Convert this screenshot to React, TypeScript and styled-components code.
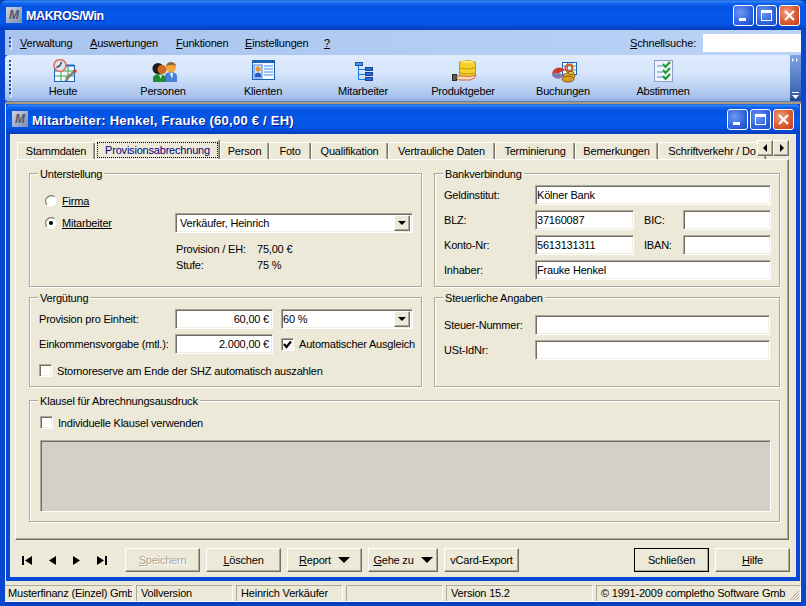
import React from 'react';
import styled, { createGlobalStyle } from 'styled-components';

const GlobalStyle = createGlobalStyle`
  html, body {
    margin: 0;
    padding: 0;
    background: #0a3ec0;
  }
  * {
    box-sizing: border-box;
  }
  body {
    font-family: "Liberation Sans", Arial, sans-serif;
    font-size: 11px;
    letter-spacing: -0.2px;
    color: #000;
  }
`;

const sunken = `
  border: 1px solid;
  border-color: #aca899 #fff #fff #aca899;
  box-shadow: inset 1px 1px 0 #716f64, inset -1px -1px 0 #f1efe2;
  background: #fff;
`;

const raised = `
  border: 1px solid;
  border-color: #fff #716f64 #716f64 #fff;
  box-shadow: inset -1px -1px 0 #aca899;
  background: #ece9d8;
`;

const titleGradient = `linear-gradient(180deg, #0a4fd8 0, #3d8bf5 1px, #1268f0 3px, #0453e0 7px, #0458ea 16px, #0455e4 24px, #0343c8 28px, #0a3ec0 30px)`;

const Frame = styled.div`
  width: 806px;
  height: 606px;
  display: flex;
  flex-direction: column;
  padding: 0 5px 4px;
  overflow: hidden;
  background: #0848d0;
  border-radius: 7px 7px 0 0;
`;

const TitleBar = styled.div<{ $child?: boolean }>`
  display: flex;
  align-items: center;
  flex: none;
  height: 30px;
  background: ${titleGradient};
  color: #fff;
  font-family: "Liberation Sans", Arial, sans-serif;
  font-weight: 700;
  font-size: ${p => (p.$child ? '13px' : '12.5px')};
  letter-spacing: ${p => (p.$child ? '0.25px' : '-0.4px')};
  text-shadow: 1px 1px 0 #0f1a89;
  margin: ${p => (p.$child ? '0' : '0 -5px')};
  padding: 0 6px;
  border-radius: ${p => (p.$child ? '5px 5px 0 0' : '7px 7px 0 0')};
`;

const AppIcon = styled.span`
  width: 16px;
  height: 16px;
  flex: none;
  margin-right: 4px;
  display: flex;
  align-items: center;
  justify-content: center;
  background: linear-gradient(135deg, #ccd6e8, #7f8cab);
  color: #4d566c;
  font: italic 700 12px "Liberation Sans", sans-serif;
  text-shadow: none;
  letter-spacing: 0;
`;

const TitleText = styled.span`
  flex: 1;
  padding-top: 2px;
  white-space: nowrap;
`;

const WinButtons = styled.div`
  display: flex;
  gap: 2px;
`;

const WinButton = styled.button<{ $close?: boolean }>`
  width: 21px;
  height: 21px;
  padding: 0;
  display: flex;
  align-items: center;
  justify-content: center;
  border: 1px solid #fff;
  border-radius: 3px;
  background: ${p =>
    p.$close
      ? 'radial-gradient(circle at 35% 35%, #f0a088, #dc5a30 55%, #c23c18)'
      : 'radial-gradient(circle at 35% 35%, #6f9af0, #2f63dd 60%, #1c48c4)'};
`;

const MenuBar = styled.div`
  flex: none;
  height: 25px;
  display: flex;
  align-items: center;
  padding-left: 4px;
  background: linear-gradient(90deg, #a9c4ee, #bad3f6);
`;

const Gripper = styled.span<{ $h: number }>`
  flex: none;
  width: 2px;
  height: ${p => p.$h}px;
  background: repeating-linear-gradient(180deg, #27509c 0 2px, transparent 2px 4px);
  box-shadow: 1px 1px 0 rgba(255, 255, 255, 0.7);
`;

const MenuItem = styled.span<{ $w: number }>`
  flex: none;
  width: ${p => p.$w}px;
`;

const Key = styled.span`
  text-decoration: underline;
`;

const Search = styled.div`
  margin-left: auto;
  display: flex;
  align-items: center;
  gap: 7px;
`;

const SearchInput = styled.div`
  width: 98px;
  height: 18px;
  background: #fff;
`;

const Toolbar = styled.div`
  flex: none;
  height: 47px;
  display: flex;
  align-items: flex-start;
  padding-left: 4px;
  border-radius: 4px 0 0 4px;
  background: linear-gradient(180deg, #dfebfd 0, #d6e5fb 40%, #a9c3ec 90%, #8fb0e2 100%);
  border-bottom: 1px solid #5b7fb8;
`;

const ToolGrip = styled(Gripper)`
  margin-top: 5px;
`;

const ToolItems = styled.div`
  display: flex;
  margin-left: 2px;
`;

const ToolItem = styled.div`
  width: 100px;
  display: flex;
  flex-direction: column;
  align-items: center;
  padding-top: 4px;
  gap: 2px;
`;

const Chevron = styled.div`
  margin-left: auto;
  width: 11px;
  height: 46px;
  display: flex;
  flex-direction: column;
  justify-content: space-between;
  align-items: center;
  padding: 3px 0 2px;
  background: linear-gradient(180deg, #7fa4e4, #3e68b8 80%, #1f448e);
  color: #fff;
`;

const Divider = styled.div`
  flex: none;
  height: 2px;
  background: #a8977a;
`;

const MdiArea = styled.div`
  flex: none;
  padding: 0 1px 4px 1px;
  background: #ece9d8;
`;

const ChildWindow = styled.div`
  padding-bottom: 4px;
  background: #0848d8;
`;

const ChildBody = styled.div`
  margin: 0 4px;
  height: 443px;
  padding: 5px 0 0 5px;
  background: #ece9d8;
`;

const Tabs = styled.div`
  position: relative;
  display: flex;
  align-items: flex-end;
  width: 772px;
  height: 20px;
  margin-left: 2px;
  overflow: hidden;
`;

const Tab = styled.div<{ $w: number; $active?: boolean }>`
  flex: none;
  width: ${p => p.$w}px;
  height: ${p => (p.$active ? '20px' : '17px')};
  padding-top: 2px;
  text-align: center;
  white-space: nowrap;
  overflow: hidden;
  border-top: 1px solid #fff;
  border-left: 1px solid #fff;
  border-right: 1px solid #716f64;
  box-shadow: inset -1px 0 0 #aca899;
  border-radius: 2px 2px 0 0;
  color: ${p => (p.$active ? '#000080' : '#000')};
  background: #ece9d8;
`;

const FocusText = styled.span`
  display: block;
  margin: 0 1px;
  height: 16px;
  line-height: 14px;
  border: 1px dotted #000;
`;

const TabScroll = styled.div`
  position: absolute;
  top: 1px;
  right: 0;
  display: flex;
`;

const ScrollButton = styled.span`
  ${raised}
  width: 16px;
  height: 16px;
  display: flex;
  align-items: center;
  justify-content: center;
`;

const Page = styled.div`
  width: 774px;
  height: 381px;
  padding: 13px 9px 0 13px;
  border-top: 1px solid #fff;
  border-left: 1px solid #fff;
  border-right: 1px solid #716f64;
  border-bottom: 1px solid #716f64;
  box-shadow: inset -1px -1px 0 #aca899;
  display: grid;
  grid-template-columns: 393px 346px;
  grid-template-rows: 114px 90px 125px;
  column-gap: 12px;
  row-gap: 10px;
`;

const Group = styled.div<{ $wide?: boolean; $pad: string }>`
  position: relative;
  padding: ${p => p.$pad};
  border: 1px solid #aca899;
  box-shadow: 1px 1px 0 #fff, inset 1px 1px 0 #fff;
  grid-column: ${p => (p.$wide ? '1 / 3' : 'auto')};
  margin-top: ${p => (p.$wide ? '3px' : '0')};
`;

const Legend = styled.span`
  position: absolute;
  top: -6px;
  left: 8px;
  padding: 0 2px;
  background: #ece9d8;
  white-space: nowrap;
`;

const ChoiceRow = styled.div<{ $top?: number }>`
  display: flex;
  align-items: center;
  height: 20px;
  gap: 5px;
  margin-top: ${p => p.$top ?? 0}px;
`;

const RadioLabel = styled.span`
  text-decoration: underline;
  width: 114px;
`;

const Combo = styled.div<{ $w: number; $left?: number; $inset: number }>`
  ${sunken}
  flex: none;
  width: ${p => p.$w}px;
  height: 20px;
  margin-left: ${p => p.$left ?? 0}px;
  padding: 0 2px 0 ${p => p.$inset}px;
  display: flex;
  align-items: center;
  justify-content: space-between;
`;

const ComboButton = styled.span`
  ${raised}
  width: 16px;
  height: 16px;
  display: flex;
  align-items: center;
  justify-content: center;
`;

const Triangle = styled.i<{ $size: number }>`
  display: block;
  border-style: solid;
  border-color: #000 transparent transparent;
  border-width: ${p => p.$size}px ${p => p.$size}px 0;
`;

const InfoGrid = styled.div`
  display: grid;
  grid-template-columns: 81px auto;
  grid-auto-rows: 16px;
  align-items: center;
  margin: 8px 0 0 131px;
`;

const BankGrid = styled.div`
  display: grid;
  grid-template-columns: 91px 99px 10px 39px 88px;
  grid-auto-rows: 20px;
  row-gap: 5px;
  align-items: center;
`;

const Field = styled.div<{ $span?: number; $right?: boolean; $w?: number }>`
  ${sunken}
  height: 20px;
  grid-column: ${p => (p.$span ? `span ${p.$span}` : 'auto')};
  ${p => (p.$w ? `width: ${p.$w}px; flex: none;` : '')}
  padding: ${p => (p.$right ? '0 3px 0 0' : '0 0 0 1px')};
  display: flex;
  align-items: center;
  justify-content: ${p => (p.$right ? 'flex-end' : 'flex-start')};
  white-space: nowrap;
`;

const Gap = styled.span``;

const TaxGrid = styled.div`
  display: grid;
  grid-template-columns: 91px 235px;
  grid-auto-rows: 20px;
  row-gap: 5px;
  align-items: center;
`;

const PayRow = styled.div`
  display: flex;
  align-items: center;
  height: 20px;
  margin-bottom: 5px;
`;

const PayLabel = styled.span`
  width: 136px;
  flex: none;
  white-space: nowrap;
`;

const CheckRow = styled.div<{ $top?: number; $left?: number }>`
  display: flex;
  align-items: center;
  gap: 5px;
  margin-top: ${p => p.$top ?? 0}px;
  margin-left: ${p => p.$left ?? 0}px;
  white-space: nowrap;
`;

const Box = styled.span`
  ${sunken}
  flex: none;
  width: 13px;
  height: 13px;
  display: flex;
  align-items: center;
  justify-content: center;
`;

const ClauseBox = styled.div`
  ${sunken}
  background: #d4d0c8;
  height: 72px;
  margin-top: 11px;
  box-shadow: inset 1px 1px 0 #716f64, inset -1px -1px 0 #d4d0c8;
`;

const ActionBar = styled.div`
  display: flex;
  align-items: center;
  gap: 6px;
  height: 24px;
  margin: 8px 0 0 -5px;
  padding-right: 6px;
`;

const NavIcons = styled.div`
  width: 109px;
  flex: none;
  display: flex;
  justify-content: space-between;
  padding: 0 11px 0 12px;
`;

const Button = styled.button<{ $w?: number; $off?: boolean; $default?: boolean; $push?: boolean }>`
  ${raised}
  flex: none;
  width: ${p => p.$w ?? 75}px;
  height: 24px;
  padding: 0 0 1px;
  font: inherit;
  letter-spacing: inherit;
  display: flex;
  align-items: center;
  justify-content: center;
  gap: 7px;
  color: ${p => (p.$off ? '#aca899' : '#000')};
  text-shadow: ${p => (p.$off ? '1px 1px 0 #fff' : 'none')};
  margin-left: ${p => (p.$push ? 'auto' : '0')};
  ${p => (p.$default ? 'outline: 1px solid #000; outline-offset: -1px;' : '')}
`;

const StatusBar = styled.div`
  flex: none;
  height: 17px;
  display: flex;
  gap: 3px;
  background: #ece9d8;
  border-bottom: 1px solid #fff;
`;

const StatusPanel = styled.div<{ $w?: number; $first?: boolean }>`
  position: relative;
  flex: ${p => (p.$w ? 'none' : '1')};
  width: ${p => (p.$w ? `${p.$w}px` : 'auto')};
  padding-left: ${p => (p.$first ? '3px' : '4px')};
  border-top: 1px solid #aca899;
  border-left: ${p => (p.$first ? '0' : '1px solid #aca899')};
  border-right: 1px solid #fff;
  white-space: nowrap;
  overflow: hidden;
  line-height: 15px;
`;

const Grip = styled.svg`
  position: absolute;
  right: 0;
  bottom: 0;
`;

const StatusFill = styled.div`
  flex: none;
  height: 3px;
  background: #0a3ec0;
`;

const MinIcon = () => (
  <svg width="13" height="13" viewBox="0 0 13 13"><rect x="2" y="9" width="7" height="3" fill="#fff" /></svg>
);
const MaxIcon = () => (
  <svg width="13" height="13" viewBox="0 0 13 13">
    <rect x="1.5" y="1.5" width="10" height="10" fill="none" stroke="#fff" />
    <rect x="1" y="1" width="11" height="3" fill="#fff" />
  </svg>
);
const CloseIcon = () => (
  <svg width="13" height="13" viewBox="0 0 13 13">
    <path d="M2 2L11 11M11 2L2 11" stroke="#fff" strokeWidth="2.2" />
  </svg>
);

const WindowControls = () => (
  <WinButtons>
    <WinButton><MinIcon /></WinButton>
    <WinButton><MaxIcon /></WinButton>
    <WinButton $close><CloseIcon /></WinButton>
  </WinButtons>
);

const Radio = ({ checked }: { checked?: boolean }) => (
  <svg width="12" height="12" viewBox="0 0 12 12" style={{ flex: 'none' }}>
    <circle cx="6" cy="6" r="5.5" fill="#fff" />
    <path d="M1.8 9.5A5.5 5.5 0 0 1 9.5 1.8" fill="none" stroke="#8a8778" strokeWidth="1.3" />
    {checked && <circle cx="6" cy="6" r="2" fill="#000" />}
  </svg>
);

const Tick = () => (
  <svg width="9" height="9" viewBox="0 0 9 9"><path d="M1 4L3.5 7L8 1.5" fill="none" stroke="#000" strokeWidth="2.2" /></svg>
);

const HeuteIcon = () => (
  <svg width="32" height="24" viewBox="0 0 32 24">
    <rect x="7.5" y="6.5" width="20" height="16" fill="#f4f8ff" stroke="#1a62c0" />
    <path d="M8 12H27M8 17H27M14 7V22M21 7V22" stroke="#2ea84a" />
    <path d="M8 6.5H27" stroke="#1a62c0" strokeWidth="2" />
    <circle cx="13" cy="6.5" r="6" fill="#dfe4ea" stroke="#e06a5c" strokeWidth="1.6" />
    <path d="M13 6.5L9.5 8.5M13 6.5L14.5 3" stroke="#444c5a" strokeWidth="1.6" />
    <path d="M19 20L28 12" stroke="#8a7d74" strokeWidth="3" />
    <path d="M27 13L29 11" stroke="#d8402a" strokeWidth="3" />
    <path d="M19 20L17.5 22L20 21.5Z" fill="#333" />
  </svg>
);

const PersonenIcon = () => (
  <svg width="32" height="24" viewBox="0 0 32 24">
    <path d="M18 23V16Q19 13 25 13Q30 14 30 17V23Z" fill="#4a80d8" />
    <path d="M23 14H26L25 20Z" fill="#fff" />
    <circle cx="24" cy="8.5" r="5" fill="#f2a53a" />
    <path d="M19 7Q20 3 24 3Q28 3 29 7Q25 5 19 7Z" fill="#8c6a3a" />
    <path d="M6 23V18Q8 15 13 15Q18 16 19 19V23Z" fill="#1f8a34" />
    <path d="M12 16H15L14 20Z" fill="#dff2df" />
    <circle cx="11" cy="9.5" r="5.5" fill="#1c1c1c" />
    <circle cx="15" cy="10.5" r="4.5" fill="#d06a20" />
  </svg>
);

const KlientenIcon = () => (
  <svg width="32" height="24" viewBox="0 0 32 24">
    <rect x="5.5" y="1.5" width="22" height="19" fill="#f4f8ff" stroke="#1a62c0" />
    <rect x="5" y="1" width="23" height="3" fill="#1a62c0" />
    <rect x="7" y="6" width="8" height="13" fill="#cfe0f8" stroke="#4a80d8" />
    <circle cx="11" cy="10" r="2.5" fill="#e8902a" />
    <path d="M8 18V15Q11 12 14 15V18Z" fill="#2a5cc0" />
    <path d="M17 7H26M17 10H26M17 13H26M17 16H26" stroke="#4a90e0" />
  </svg>
);

const MitarbeiterIcon = () => (
  <svg width="32" height="24" viewBox="0 0 32 24">
    <rect x="8.5" y="3.5" width="7" height="3" fill="#4a9ae8" stroke="#1f4fa8" />
    <path d="M11.5 7V20.5H18M12 10.5H18M12 15.5H18" fill="none" stroke="#1a78e0" />
    <rect x="18.5" y="8.5" width="7" height="3" fill="#2a70d0" stroke="#1f3f98" />
    <rect x="18.5" y="13.5" width="7" height="3" fill="#2a70d0" stroke="#1f3f98" />
    <rect x="18.5" y="18.5" width="7" height="3" fill="#2a70d0" stroke="#1f3f98" />
  </svg>
);

const ProduktgeberIcon = () => (
  <svg width="32" height="24" viewBox="0 0 32 24">
    <path d="M12.5 3Q20.5 0 28.5 3V17Q20.5 20 12.5 17Z" fill="#f6d02c" stroke="#c09a10" />
    <path d="M13 9Q20.5 11 28 9M13 14Q20.5 16 28 14" fill="none" stroke="#c09a10" />
    <path d="M13 3Q20.5 0.5 28 3Q20.5 5.5 13 3Z" fill="#ffe870" />
    <rect x="5.5" y="15.5" width="4" height="6" fill="#555b60" stroke="#2c2c2c" />
    <path d="M10 17H16Q22 18.5 29 16Q28 20 23 21H14Q11 21 10 20Z" fill="#f8dcc0" stroke="#c86a38" />
  </svg>
);

const BuchungenIcon = () => (
  <svg width="32" height="24" viewBox="0 0 32 24">
    <rect x="15.5" y="3.5" width="14" height="12" fill="#f4f8ff" stroke="#1a62c0" />
    <path d="M16 7H29M16 11H29M20.5 4V15M25 4V15" stroke="#3aa85a" />
    <circle cx="22" cy="9" r="3.5" fill="none" stroke="#e0502a" strokeWidth="2" />
    <path d="M5 15A7.5 7.5 0 0 1 18 11L12 14Z" fill="#d03a2a" />
    <path d="M5 15Q5 19 12 20L17 17L12 14Z" fill="#7a7ab0" />
    <ellipse cx="22" cy="17" rx="6" ry="3" fill="#e8b030" stroke="#8a5a10" />
    <ellipse cx="21" cy="20" rx="6" ry="3" fill="#d89a20" stroke="#8a5a10" />
    <ellipse cx="24" cy="14" rx="3" ry="1.5" fill="#f0d050" stroke="#8a5a10" />
  </svg>
);

const AbstimmenIcon = () => (
  <svg width="32" height="24" viewBox="0 0 32 24">
    <rect x="7.5" y="1.5" width="18" height="21" fill="#eef3fc" stroke="#8d9ec8" />
    <path d="M10 7H16M10 13H16M10 18H16" stroke="#4a90e0" />
    <path d="M16 5L18.5 8L23 3M16 11L18.5 14L23 9M16 17L18.5 20L23 15" fill="none" stroke="#1a9a2a" strokeWidth="2" />
  </svg>
);

const NavIcon = ({ d }: { d: string }) => (
  <svg width="11" height="9" viewBox="0 0 11 9"><path d={d} fill="#000" /></svg>
);

const menu: [string, string, number][] = [
  ['V', 'erwaltung', 70],
  ['A', 'uswertungen', 86],
  ['F', 'unktionen', 69],
  ['E', 'instellungen', 79],
  ['?', '', 20],
];

const tools: [string, React.FC][] = [
  ['Heute', HeuteIcon],
  ['Personen', PersonenIcon],
  ['Klienten', KlientenIcon],
  ['Mitarbeiter', MitarbeiterIcon],
  ['Produktgeber', ProduktgeberIcon],
  ['Buchungen', BuchungenIcon],
  ['Abstimmen', AbstimmenIcon],
];

const tabs: [string, number][] = [
  ['Stammdaten', 78],
  ['Provisionsabrechnung', 125],
  ['Person', 49],
  ['Foto', 42],
  ['Qualifikation', 77],
  ['Vertrauliche Daten', 107],
  ['Terminierung', 80],
  ['Bemerkungen', 83],
  ['Schriftverkehr / Do', 108],
];

export default function App() {
  return (
    <>
      <GlobalStyle />
      <Frame>
        <TitleBar>
          <AppIcon>M</AppIcon>
          <TitleText>MAKROS/Win</TitleText>
          <WindowControls />
        </TitleBar>

        <MenuBar>
          <Gripper $h={12} />
          <MenuItem $w={9} />
          {menu.map(([k, rest, w]) => (
            <MenuItem key={k} $w={w}><Key>{k}</Key>{rest}</MenuItem>
          ))}
          <Search>
            <span><Key>S</Key>chnellsuche:</span>
            <SearchInput />
          </Search>
        </MenuBar>

        <Toolbar>
          <ToolGrip $h={36} />
          <ToolItems>
            {tools.map(([label, Icon]) => (
              <ToolItem key={label}>
                <Icon />
                <span>{label}</span>
              </ToolItem>
            ))}
          </ToolItems>
          <Chevron>
            <svg width="7" height="5" viewBox="0 0 7 5"><path d="M0 0L2 2L0 4ZM4 0L6 2L4 4Z" fill="#fff" /></svg>
            <svg width="7" height="7" viewBox="0 0 7 7"><path d="M0 0H7V1H0ZM0 3H7L3.5 7Z" fill="#fff" /></svg>
          </Chevron>
        </Toolbar>
        <Divider />

        <MdiArea>
          <ChildWindow>
            <TitleBar $child>
              <AppIcon>M</AppIcon>
              <TitleText>Mitarbeiter: Henkel, Frauke (60,00 € / EH)</TitleText>
              <WindowControls />
            </TitleBar>
            <ChildBody>
              <Tabs>
                {tabs.map(([label, w], i) => (
                  <Tab key={label} $w={w} $active={i === 1}>
                    {i === 1 ? <FocusText>{label}</FocusText> : label}
                  </Tab>
                ))}
                <TabScroll>
                  <ScrollButton>
                    <svg width="5" height="8" viewBox="0 0 5 8"><path d="M4 0V8L0 4Z" fill="#000" /></svg>
                  </ScrollButton>
                  <ScrollButton>
                    <svg width="5" height="8" viewBox="0 0 5 8"><path d="M1 0V8L5 4Z" fill="#000" /></svg>
                  </ScrollButton>
                </TabScroll>
              </Tabs>

              <Page>
                <Group $pad="17px 8px 0 15px">
                  <Legend>Unterstellung</Legend>
                  <ChoiceRow>
                    <Radio />
                    <RadioLabel>Firma</RadioLabel>
                  </ChoiceRow>
                  <ChoiceRow $top={2}>
                    <Radio checked />
                    <RadioLabel>Mitarbeiter</RadioLabel>
                    <Combo $w={238} $inset={4}>
                      Verkäufer, Heinrich
                      <ComboButton><Triangle $size={4} /></ComboButton>
                    </Combo>
                  </ChoiceRow>
                  <InfoGrid>
                    <span>Provision / EH:</span><span>75,00 €</span>
                    <span>Stufe:</span><span>75 %</span>
                  </InfoGrid>
                </Group>

                <Group $pad="11px 8px 0 9px">
                  <Legend>Bankverbindung</Legend>
                  <BankGrid>
                    <span>Geldinstitut:</span><Field $span={4}>Kölner Bank</Field>
                    <span>BLZ:</span><Field>37160087</Field><Gap /><span>BIC:</span><Field />
                    <span>Konto-Nr:</span><Field>5613131311</Field><Gap /><span>IBAN:</span><Field />
                    <span>Inhaber:</span><Field $span={4}>Frauke Henkel</Field>
                  </BankGrid>
                </Group>

                <Group $pad="11px 8px 0 9px">
                  <Legend>Vergütung</Legend>
                  <PayRow>
                    <PayLabel>Provision pro Einheit:</PayLabel>
                    <Field $right $w={98}>60,00 €</Field>
                    <Combo $w={132} $left={8} $inset={1}>
                      60 %
                      <ComboButton><Triangle $size={4} /></ComboButton>
                    </Combo>
                  </PayRow>
                  <PayRow>
                    <PayLabel>Einkommensvorgabe (mtl.):</PayLabel>
                    <Field $right $w={98}>2.000,00 €</Field>
                    <CheckRow $left={8}><Box><Tick /></Box>Automatischer Ausgleich</CheckRow>
                  </PayRow>
                  <CheckRow $top={10}><Box />Stornoreserve am Ende der SHZ automatisch auszahlen</CheckRow>
                </Group>

                <Group $pad="17px 8px 0 9px">
                  <Legend>Steuerliche Angaben</Legend>
                  <TaxGrid>
                    <span>Steuer-Nummer:</span><Field />
                    <span>USt-IdNr:</span><Field />
                  </TaxGrid>
                </Group>

                <Group $wide $pad="15px 8px 0 10px">
                  <Legend>Klausel für Abrechnungsausdruck</Legend>
                  <CheckRow><Box />Individuelle Klausel verwenden</CheckRow>
                  <ClauseBox />
                </Group>
              </Page>

              <ActionBar>
                <NavIcons>
                  <NavIcon d="M0 0H2V9H0ZM10 0V9L3 4.5Z" />
                  <NavIcon d="M9 0V9L2 4.5Z" />
                  <NavIcon d="M1 0V9L8 4.5Z" />
                  <NavIcon d="M0 0V9L7 4.5ZM8 0H10V9H8Z" />
                </NavIcons>
                <Button $off><span><Key>S</Key>peichern</span></Button>
                <Button><span><Key>L</Key>öschen</span></Button>
                <Button><span><Key>R</Key>eport</span><Triangle $size={6} /></Button>
                <Button $w={70}><span><Key>G</Key>ehe zu</span><Triangle $size={6} /></Button>
                <Button>vCard-Export</Button>
                <Button $push $default>Schließen</Button>
                <Button><span><Key>H</Key>ilfe</span></Button>
              </ActionBar>
            </ChildBody>
          </ChildWindow>
        </MdiArea>

        <StatusBar>
          <StatusPanel $w={128} $first>Musterfinanz (Einzel) Gmb</StatusPanel>
          <StatusPanel $w={97}>Vollversion</StatusPanel>
          <StatusPanel $w={107}>Heinrich Verkäufer</StatusPanel>
          <StatusPanel $w={97} />
          <StatusPanel $w={147}>Version 15.2</StatusPanel>
          <StatusPanel>
            © 1991-2009 completho Software Gmb
            <Grip width="12" height="12" viewBox="0 0 12 12">
              <path d="M11 2L2 11M11 5L5 11M11 8L8 11" stroke="#aca899" />
            </Grip>
          </StatusPanel>
        </StatusBar>
        <StatusFill />
      </Frame>
    </>
  );
}
